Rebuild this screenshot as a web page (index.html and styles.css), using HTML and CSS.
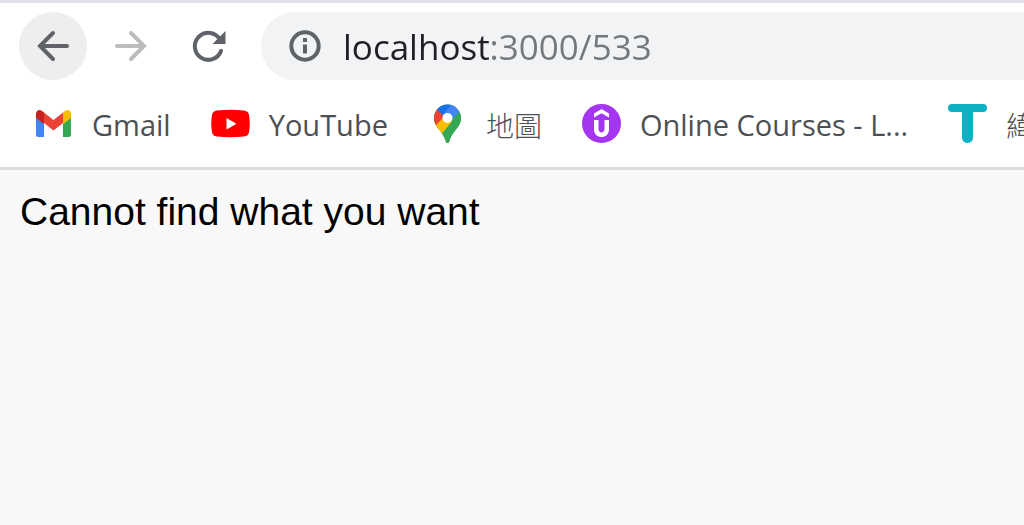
FILE: index.html
```html
<!DOCTYPE html>
<html lang="en">
<head>
  <meta charset="UTF-8" />
  <meta name="viewport" content="width=device-width, initial-scale=1.0"/>
  <title>localhost:3000/533</title>
  <link rel="stylesheet" href="styles.css">
</head>
<body>

  <header class="browser">
    <!-- Navigation buttons and address bar -->
    <div class="toolbar">
      <div class="nav">
        <button class="nav-btn active" type="button" aria-label="Back">
          <svg width="34" height="34" viewBox="0 0 34 34"><path d="M31 17H4M17 4L4 17l13 13" /></svg>
        </button>
        <button class="nav-btn" type="button" aria-label="Forward" disabled>
          <svg width="34" height="34" viewBox="0 0 34 34"><path d="M3 17h27M17 4l13 13-13 13" /></svg>
        </button>
        <button class="nav-btn" type="button" aria-label="Reload">
          <svg width="34" height="34" viewBox="0 0 34 34">
            <path d="M28 10.500A13.500 13.500 0 1 0 29 22" />
            <path class="solid" d="M33.500 2V15H20.500z" />
          </svg>
        </button>
      </div>
      <div class="address">
        <svg class="info" width="32" height="32" viewBox="0 0 32 32">
          <circle cx="16" cy="16" r="13.700" />
          <path d="M16 14.500v9M16 8v4" />
        </svg>
        <input class="url" type="text" value="localhost:3000/533" aria-label="Address" spellcheck="false">
      </div>
    </div>

    <!-- Bookmarks -->
    <nav class="bookmarks" aria-label="Bookmarks">
      <a class="bookmark" href="#gmail">
        <svg width="39" height="39" viewBox="0 0 39 39">
          <path fill="#4285f4" d="M2 12l8 6v15H4.500A2.500 2.500 0 0 1 2 30.500z" />
          <path fill="#34a853" d="M37 12l-8 6v15h5.500a2.500 2.500 0 0 0 2.500-2.500z" />
          <path fill="#fbbc04" d="M29 8.500l2-1.500c2.500-2 6-.500 6 3v4l-8 6z" />
          <path fill="#ea4335" d="M10 8.500l9.500 7.500L29 8.500V19l-9.500 7.500L10 19z" />
          <path fill="#c5221f" d="M10 8.500L8 7c-2.500-2-6-.500-6 3v4l8 6z" />
        </svg>
        <span class="label">Gmail</span>
      </a>
      <a class="bookmark" href="#youtube">
        <svg width="39" height="39" viewBox="0 0 39 39">
          <path fill="#f00" d="M6 6.500Q19.500 5 33 6.500Q37.500 7 38 11Q39.500 19.500 38 28Q37.500 32 33 32.500Q19.500 34 6 32.500Q1.500 32 1 28Q-.500 19.500 1 11Q1.500 7 6 6.500z" />
          <path fill="#fff" d="M15.500 14v11.500l10-5.700z" />
        </svg>
        <span class="label">YouTube</span>
      </a>
      <a class="bookmark" href="#maps">
        <svg width="39" height="39" viewBox="0 0 39 39">
          <clipPath id="pin"><path d="M19.500 0.500C12 .500 6 6.500 6 14c0 5 2.200 8 5 11.500 3.800 4.700 5.500 7.500 6.800 12 .7 2.300 2.700 2.300 3.400 0 1.300-4.500 3-7.300 6.800-12 2.800-3.500 5-6.500 5-11.500C33 6.500 27 .500 19.500.500z" /></clipPath>
          <g clip-path="url(#pin)">
            <path fill="#34a853" d="M0 0h39v39H0z" />
            <path fill="#ea4335" d="M0 0h9.500l10 14L6.500 24 0 18z" />
            <path fill="#1a73e8" d="M6 3L16 12l9-13H8z" />
            <path fill="#4285f4" d="M23.700 0L14 12l5.500 8L34 5.500z" />
            <path fill="#34a853" d="M32 8L13 31l6 9 20-18V8z" />
            <path fill="#fbbc04" d="M6 23L15 14l9 3.500L11 33z" />
          </g>
          <circle cx="19.500" cy="14" r="5" fill="#fff" />
        </svg>
        <span class="label cjk" lang="zh-Hant">地圖</span>
      </a>
      <a class="bookmark" href="#courses">
        <svg width="39" height="39" viewBox="0 0 39 39">
          <circle cx="19.500" cy="19.500" r="19.500" fill="#a435f0" />
          <path fill="#fff" d="M19.500 5l7.500 4.500v4L19.500 9.300 12 13.500v-4z" />
          <path fill="#fff" d="M12 16h4.500v9c0 4.600 6 4.600 6 0v-9H27v9.500c0 10-15 10-15 0z" />
        </svg>
        <span class="label">Online Courses - L...</span>
      </a>
      <a class="bookmark" href="#tibame">
        <svg width="39" height="39" viewBox="0 0 39 39">
          <rect x="0" y="0" width="39" height="8" rx="4" fill="#0fb0c4" />
          <path fill="#0fb0c4" d="M14 4h11v29.500a5.500 5.500 0 0 1-11 0z" />
        </svg>
        <span class="label cjk" lang="zh-Hant">緯育TibaMe</span>
      </a>
    </nav>
  </header>

  <main class="page">Cannot find what you want</main>

</body>
</html>
```

FILE: styles.css
```css
* {
  box-sizing: border-box;
  margin: 0;
  padding: 0;
}

body {
  font-family: "Liberation Sans", Arial, sans-serif;
  background: #f8f8f8;
  min-height: 100vh;
  overflow-x: hidden;
}

.browser {
  font-family: "Open Sans", "Noto Sans CJK TC", sans-serif;
  background: #fff;
  border-top: 3px solid #dee1e6;
  border-bottom: 3px solid #dcdcdc;
  overflow: hidden;
}

.toolbar {
  display: flex;
  gap: 18px;
  padding: 9px 0 0 19px;
}

.nav {
  display: flex;
  gap: 10px;
}

.nav-btn {
  display: flex;
  align-items: center;
  justify-content: center;
  width: 68px;
  height: 68px;
  border: none;
  border-radius: 50%;
  background: transparent;
  color: #5f6368;
}

.nav-btn.active {
  background: #eee;
}

.nav-btn:disabled {
  color: #babcbe;
}

.nav-btn svg {
  fill: none;
  stroke: currentColor;
  stroke-width: 4;
  stroke-linecap: round;
}

.nav-btn .solid {
  fill: currentColor;
  stroke: none;
}

.address {
  flex: 1;
  display: flex;
  align-items: center;
  gap: 22px;
  height: 68px;
  padding-left: 28px;
  background: #f1f3f4;
  border-radius: 34px 0 0 34px;
}

.info {
  flex: none;
  fill: none;
  stroke: #5f6368;
  stroke-width: 4;
}

/* Host is dark, port and path are grey */
.url {
  flex: 1;
  min-width: 0;
  border: none;
  outline: none;
  font-family: inherit;
  font-size: 35px;
  color: transparent;
  background: linear-gradient(to right, #202124 146px, #74787c 146px);
  -webkit-background-clip: text;
  background-clip: text;
}

.bookmarks {
  display: flex;
  gap: 40px;
  padding: 20px 0 20px 34px;
}

.bookmark {
  flex: none;
  display: flex;
  align-items: center;
  gap: 19px;
  height: 47px;
  color: #4c4f53;
  font-size: 29px;
  text-decoration: none;
  white-space: nowrap;
}

.label {
  padding-top: 2px;
}

.cjk {
  font-size: 28px;
  font-weight: 300;
}

.page {
  padding: 19px 20px;
  font-size: 39px;
  line-height: 45px;
  color: #000;
}
```
